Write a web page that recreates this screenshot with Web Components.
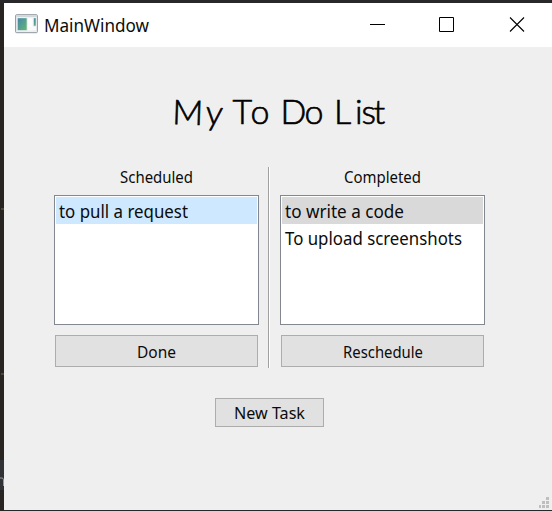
<!DOCTYPE html>
<html lang="en"><head><meta charset="utf-8"><title>MainWindow</title>
<style>html,body{margin:0;width:552px;height:511px;overflow:hidden;background:#28272a}</style></head>
<body><todo-app></todo-app>
<script>
const define=(name,html,setup)=>customElements.define(name,class extends HTMLElement{
  constructor(){super();this.attachShadow({mode:'open'});}
  connectedCallback(){this.shadowRoot.innerHTML=html;if(setup)setup(this,this.shadowRoot);}
});

/* One line of text set to an exact advance width; attributes: text, width, size */
define('fit-label',`<style>:host{display:block;height:20px;color:#0b0b0b}svg{display:block;overflow:visible}
text{font-family:"Noto Sans","Open Sans",sans-serif;fill:currentColor}</style><svg height="20"><text x="0" y="15" lengthAdjust="spacingAndGlyphs"></text></svg>`,
(el,r)=>{const w=el.getAttribute('width'),t=r.querySelector('text');r.querySelector('svg').setAttribute('width',w);
t.setAttribute('textLength',w);t.style.fontSize=(el.getAttribute('size')||18)+'px';t.textContent=el.getAttribute('text');});

define('title-bar',`<style>:host{display:flex;height:44px;background:#fff;align-items:flex-start}
.icon{margin:11px 0 0 11px}fit-label{margin:14px 0 0 6px}.controls{margin:13px 0 0 auto;display:flex;gap:54px;padding-right:27px}.controls svg+svg{margin-left:0}svg{display:block;flex:none}</style>
<svg class="icon" width="23" height="20" viewBox="0 0 23 20"><defs><linearGradient id="g" x2="1" y2="1"><stop stop-color="#4687a5"/><stop offset="1" stop-color="#65b779"/></linearGradient></defs>
<rect x=".6" y=".7" width="21.8" height="18" rx="1" fill="#edf0f3" stroke="#8f969e"/><path d="M1.5 2.2H21.5" stroke="#c5cbd1"/><rect x="2.7" y="4.2" width="9" height="12" fill="url(#g)"/><rect x="13" y="4.2" width="4.6" height="12" fill="#fff"/><rect x="18.8" y="4.2" width="2" height="7.5" fill="url(#g)"/><path d="M13 13H21V16.2H13Z" fill="#f9fafb"/></svg>
<fit-label text="MainWindow" width="105" size="17.5"></fit-label>
<div class="controls"><svg width="16" height="16"><path d="M1 8.5H16" stroke="#000"/></svg>
<svg width="16" height="16"><path d="M.5 1.5H14.5V15.5H.5Z" fill="none" stroke="#000"/></svg>
<svg width="16" height="16"><path d="M1 1.5L15 15.5M15 1.5L1 15.5" fill="none" stroke="#000" stroke-width="1.1"/></svg></div>`);

define('page-title',`<style>:host{display:block;width:220px;height:46px}svg{display:block}text{font:300 34px Lato,sans-serif;fill:#000;stroke:#000;stroke-width:.65px}</style>
<svg width="220" height="46"><text y="34" x="0 33 51 60.5 78.5 98 108.5 132.5 152 162 183 189.5 201.5" rotate="2 4 0 0 0 0 0 0 0 0 0 0 0">My To Do List</text></svg>`);

define('push-button',`<style>:host{box-sizing:border-box;display:flex;justify-content:center;align-items:flex-start;border:1px solid #adadad;background:#e1e1e1}</style><slot></slot>`);
define('list-row',`<style>:host{display:block;height:27px;box-sizing:border-box;padding:6px 0 0 3px}:host([state=active]){background:#cde8ff}:host([state=inactive]){background:#d9d9d9}</style><slot></slot>`);
define('task-column',`<style>:host{display:flex;flex-direction:column;width:205px;align-items:center}
header{height:28px}.list{box-sizing:border-box;width:205px;height:130px;border:1px solid #828790;background:#fff;padding:1px}
footer{margin-top:10px}</style><header><slot name="heading"></slot></header><div class="list"><slot></slot></div><footer><slot name="action"></slot></footer>`);
define('size-grip',`<style>:host{position:absolute;right:3px;bottom:2px}svg{display:block}</style><svg width="10" height="11" fill="#bfbfbf"><path d="M7 0h3v3h-3zM3 4h3v3h-3zM7 4h3v3h-3zM0 8h2v3h-2zM3 8h3v3h-3zM7 8h3v3h-3z"/></svg>`);

define('todo-app',`<style>
:host{display:grid;grid-template-columns:4px 548px;width:552px;height:511px;padding-top:3px;box-sizing:border-box;background:#28272a}
.edge{position:relative;background:#272421}.edge svg{display:block}
.window{position:relative;height:507px;background:#efefef;display:flex;flex-direction:column}
page-title{margin:43px 0 0 168px}
.columns{display:flex;margin:31px 0 0 50px;height:201px}
.line{width:1px;height:201px;background:#a0a0a0;border-right:1px solid #fff;margin:0 10px 0 9px}
.h{margin-top:1px}.wide{width:203px;height:32px}.wide fit-label{margin-top:7px}
.new{width:109px;height:29px;margin:30px 0 0 211px}.new fit-label{margin-top:5px}
</style><div class="edge"><svg width="4" height="508"><path d="M1 206h3M1 371h3" stroke="#80664b"/><path d="M0 457h4v30h-4z" fill="#303235"/><path d="M0 475h2q1.5 0 1.5 2v6" fill="none" stroke="#999"/></svg></div>
<div class="window"><title-bar></title-bar><page-title></page-title>
<div class="columns"><task-column><fit-label class="h" slot="heading" text="Scheduled" width="73" size="17"></fit-label>
<list-row state="active"><fit-label text="to pull a request" width="129"></fit-label></list-row>
<push-button class="wide" slot="action"><fit-label text="Done" width="39" size="17"></fit-label></push-button></task-column>
<div class="line"></div>
<task-column><fit-label class="h" slot="heading" text="Completed" width="77" size="17"></fit-label>
<list-row state="inactive"><fit-label text="to write a code" width="119"></fit-label></list-row><list-row><fit-label text="To upload screenshots" width="177"></fit-label></list-row>
<push-button class="wide" slot="action"><fit-label text="Reschedule" width="80" size="17"></fit-label></push-button></task-column></div>
<push-button class="new"><fit-label text="New Task" width="71" size="17"></fit-label></push-button><size-grip></size-grip></div>`);
</script></body></html>
